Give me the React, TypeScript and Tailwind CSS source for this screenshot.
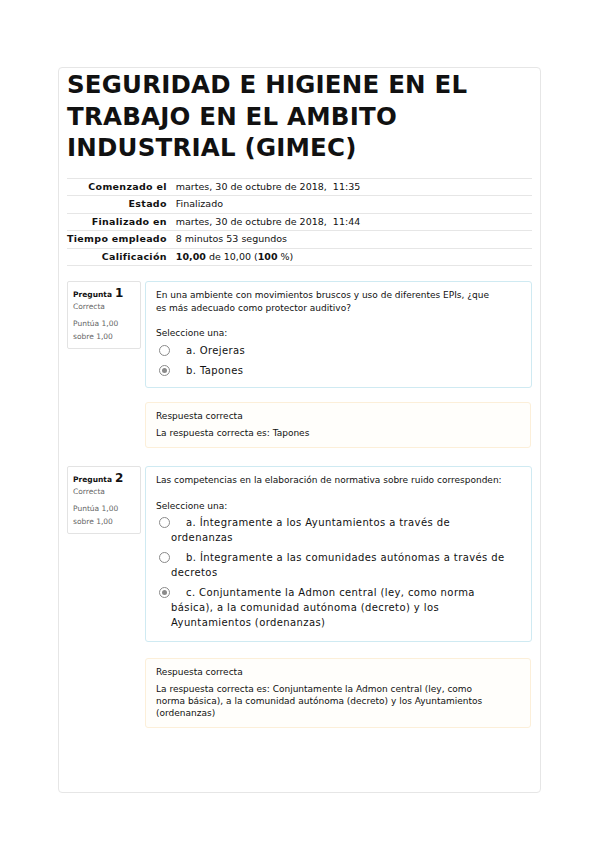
import React from 'react';

const rows: { label: string; value: React.ReactNode }[] = [
  { label: 'Comenzado el', value: 'martes, 30 de octubre de 2018,  11:35' },
  { label: 'Estado', value: 'Finalizado' },
  { label: 'Finalizado en', value: 'martes, 30 de octubre de 2018,  11:44' },
  { label: 'Tiempo empleado', value: '8 minutos 53 segundos' },
  {
    label: 'Calificación',
    value: (
      <>
        <b>10,00</b> de 10,00 (<b>100</b> %)
      </>
    ),
  },
];

function Radio({ checked }: { checked?: boolean }) {
  return (
    <span className="relative -top-[1px] mr-[16px] inline-flex h-[11px] w-[11px] items-center justify-center rounded-full border border-[#8a8a8a] bg-white indent-0 align-middle">
      {checked && <span className="h-[5px] w-[5px] rounded-full bg-[#8a8a8a]" />}
    </span>
  );
}

function Info({ n }: { n: number }) {
  return (
    <div className="w-[74px] shrink-0 self-start rounded-[2px] border border-[#e3e3e3] bg-white px-[5px] pb-[5px] pt-[4px]">
      <div className="flex items-baseline gap-[3px]">
        <span className="text-[7.5px] font-bold">Pregunta</span>
        <span className="text-[12px] font-bold leading-[14px]">{n}</span>
      </div>
      <div className="mt-[1px] text-[7.5px] text-[#666]">Correcta</div>
      <div className="mt-[4px] text-[7.5px] leading-[13px] text-[#666]">
        Puntúa 1,00
        <br />
        sobre 1,00
      </div>
    </div>
  );
}

function Option({ checked, children }: { checked?: boolean; children: React.ReactNode }) {
  return (
    <div className="ml-[3px] pl-[12px] -indent-[12px] text-[10px] leading-[15px] tracking-[0.4px]">
      <Radio checked={checked} />
      {children}
    </div>
  );
}

function Feedback({ children }: { children: React.ReactNode }) {
  return (
    <div className="ml-[78px] mr-[1px] rounded-[3px] border border-[#fcefd9] bg-[#fffefb] px-[10px] pb-[8px] pt-[7px] text-[9px] leading-[12px]">
      <div className="mb-[5px]">Respuesta correcta</div>
      {children}
    </div>
  );
}

export default function App() {
  return (
    <div
      className="min-h-[848px] bg-white pt-[67px] text-[#111]"
      style={{ fontFamily: '"DejaVu Sans", Verdana, sans-serif' }}
    >
      <div className="ml-[58px] h-[726px] w-[483px] rounded-[4px] border border-[#e6e6e6] bg-white px-[8px] pt-[1px]">
        <h1 className="text-[24.5px] font-bold leading-[31.5px] tracking-[0.2px]">
          SEGURIDAD E HIGIENE EN EL
          <br />
          TRABAJO EN EL AMBITO
          <br />
          INDUSTRIAL (GIMEC)
        </h1>

        <table className="mt-[14px] w-full border-collapse text-[9.5px] leading-[10.5px]">
          <tbody>
            {rows.map((r) => (
              <tr key={r.label} className="border-t border-[#e6e6e6]">
                <th className="w-[108px] whitespace-nowrap py-[3px] pr-[9px] text-right font-bold tracking-[0.3px]">
                  {r.label}
                </th>
                <td className="whitespace-pre py-[3px]">{r.value}</td>
              </tr>
            ))}
            <tr className="border-t border-[#e6e6e6]">
              <td colSpan={2} />
            </tr>
          </tbody>
        </table>

        <div className="mt-[15px] flex gap-[4px]">
          <Info n={1} />
          <div className="flex-1 rounded-[3px] border border-[#cfeaf2] bg-white px-[10px] pb-[9px] pt-[7px] text-[9px] leading-[13px]">
            <p>
              En una ambiente con movimientos bruscos y uso de diferentes EPIs, ¿que
              <br />
              es más adecuado como protector auditivo?
            </p>
            <p className="mb-[3px] mt-[12px]">Seleccione una:</p>
            <div className="flex flex-col gap-[5px]">
              <Option>a. Orejeras</Option>
              <Option checked>b. Tapones</Option>
            </div>
          </div>
        </div>

        <div className="mt-[14px]">
          <Feedback>
            <div>La respuesta correcta es: Tapones</div>
          </Feedback>
        </div>

        <div className="mt-[18px] flex gap-[4px]">
          <Info n={2} />
          <div className="flex-1 rounded-[3px] border border-[#cfeaf2] bg-white px-[10px] pb-[11px] pt-[7px] text-[9px] leading-[13px]">
            <p>Las competencias en la elaboración de normativa sobre ruido corresponden:</p>
            <p className="mb-[2px] mt-[13px]">Seleccione una:</p>
            <div className="flex flex-col gap-[5px]">
              <Option>
                a. Íntegramente a los Ayuntamientos a través de
                <br />
                ordenanzas
              </Option>
              <Option>
                b. Íntegramente a las comunidades autónomas a través de
                <br />
                decretos
              </Option>
              <Option checked>
                c. Conjuntamente la Admon central (ley, como norma
                <br />
                básica), a la comunidad autónoma (decreto) y los
                <br />
                Ayuntamientos (ordenanzas)
              </Option>
            </div>
          </div>
        </div>

        <div className="mt-[16px]">
          <Feedback>
            <div>
              La respuesta correcta es: Conjuntamente la Admon central (ley, como
              <br />
              norma básica), a la comunidad autónoma (decreto) y los Ayuntamientos
              <br />
              (ordenanzas)
            </div>
          </Feedback>
        </div>
      </div>
    </div>
  );
}
